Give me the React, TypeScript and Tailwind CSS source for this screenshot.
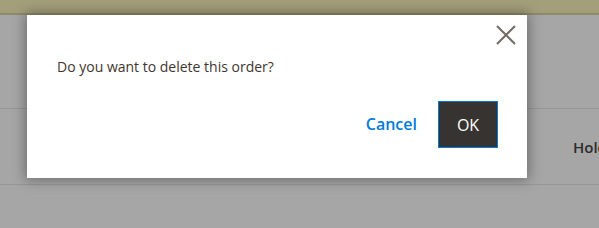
import React from "react";

export default function App() {
  return (
    <div
      className="relative w-[599px] h-[228px] overflow-hidden bg-[#a6a6a6]"
      style={{ fontFamily: '"Open Sans", "Liberation Sans", sans-serif' }}
    >
      {/* background page (under overlay) */}
      <div className="flex flex-col">
        <div className="h-[15px] bg-[#a39f7b] border-b-2 border-[#8e8b6b]" />
        <div className="h-[93px]" />
        <div className="h-px bg-[#979797]" />
        <div className="h-[75px] flex items-center whitespace-nowrap">
          <span className="ml-[25px] w-[2px] h-[2px] bg-[#a7825f] mt-[1px]" />
          <span className="ml-[548px] text-[15px] font-semibold text-[#2c2c2c] mt-[1px]">
            Hold
          </span>
        </div>
        <div className="h-px bg-[#979797]" />
      </div>

      {/* modal */}
      <div className="absolute left-[27px] top-[15px] w-[500px] h-[163px] bg-white shadow-[0_0_12px_2px_rgba(0,0,0,0.35)] flex flex-col">
        <button className="absolute right-[11px] top-[10px] w-[20px] h-[20px] flex items-center justify-center">
          <svg width="20" height="20" viewBox="0 0 20 20">
            <path
              d="M1 1 L19 19 M19 1 L1 19"
              stroke="#736b65"
              strokeWidth="2"
              fill="none"
            />
          </svg>
        </button>
        <p className="mt-[42px] ml-[30px] text-[14px] leading-[19px] text-[#41362f]">
          Do you want to delete this order?
        </p>
        <div className="mt-[25px] mr-[29px] flex items-center justify-end">
          <button className="text-[16px] font-semibold text-[#007bdb] mr-[21px] mt-[-1px]">
            Cancel
          </button>
          <button className="w-[60px] h-[47px] border border-[#007bdb] bg-[#373330] text-white text-[16px] font-medium flex items-center justify-center">
            OK
          </button>
        </div>
      </div>
    </div>
  );
}
